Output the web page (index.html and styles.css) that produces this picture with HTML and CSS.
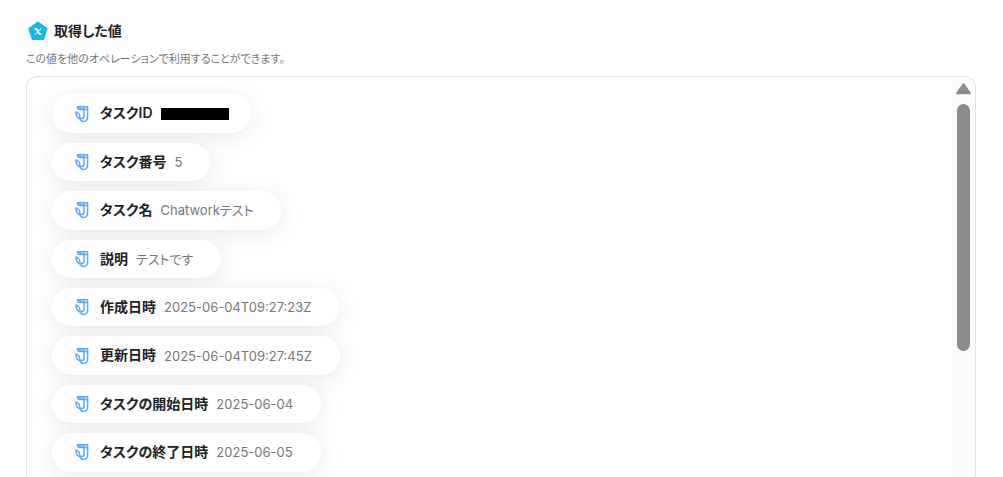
FILE: index.html
```
<!DOCTYPE html>
<html lang="ja">
	<head>
		<meta charset="utf-8">
		<title>取得した値</title>
		<link rel="stylesheet" href="styles.css">
	</head>
	<body>
		<svg class="defs" width="0" height="0" aria-hidden="true">
			<symbol id="task-icon" viewBox="0 0 16 18">
				<path d="M3.3 1.7H13.6V12C13.6 14.8 11.8 16.4 9.6 16.4C7.4 16.4 5.8 15 5.8 12.8"/>
				<path d="M3.3 1.7C3.5 3.6 4.5 4.6 6.4 4.6H10V11.2C10 12.9 9 13.6 7.4 13.6C3.8 13.6 1.9 11.6 1.9 7L4.8 8.8C5.6 9.4 5.8 10.4 5.8 12.8"/>
				<path d="M3.3 1.7L10 4.6V1.7M10 4.6H13.6"/>
			</symbol>
		</svg>
		<div class="page">
			<div class="heading">
				<svg class="heading-icon" viewBox="0 0 20 20" aria-hidden="true">
					<path class="badge" d="M10 1.5L18.6 7.8L15.3 18H4.7L1.4 7.8Z"/>
					<path class="mark" d="M6.6 7.9H8.1C9.8 7.9 10 13.1 11.8 13.1H13.3"/>
					<path class="mark mark-thin" d="M13.4 7.7C11 7.7 9.2 13.3 6.6 13.3"/>
				</svg>
				<h1 class="heading-title">取得した値</h1>
			</div>
			<p class="description">この値を他のオペレーションで利用することができます。</p>
			<div class="panel">
				<ul class="list">
					<li class="pill"><svg class="pill-icon"><use href="#task-icon"/></svg><span class="name">タスクID</span><span class="hidden-value"></span></li>
					<li class="pill"><svg class="pill-icon"><use href="#task-icon"/></svg><span class="name">タスク番号</span><span class="value">5</span></li>
					<li class="pill"><svg class="pill-icon"><use href="#task-icon"/></svg><span class="name">タスク名</span><span class="value">Chatworkテスト</span></li>
					<li class="pill"><svg class="pill-icon"><use href="#task-icon"/></svg><span class="name">説明</span><span class="value">テストです</span></li>
					<li class="pill"><svg class="pill-icon"><use href="#task-icon"/></svg><span class="name">作成日時</span><span class="value">2025-06-04T09:27:23Z</span></li>
					<li class="pill"><svg class="pill-icon"><use href="#task-icon"/></svg><span class="name">更新日時</span><span class="value">2025-06-04T09:27:45Z</span></li>
					<li class="pill"><svg class="pill-icon"><use href="#task-icon"/></svg><span class="name">タスクの開始日時</span><span class="value">2025-06-04</span></li>
					<li class="pill"><svg class="pill-icon"><use href="#task-icon"/></svg><span class="name">タスクの終了日時</span><span class="value">2025-06-05</span></li>
				</ul>
				<div class="scrollbar">
					<svg class="scroll-up" viewBox="0 0 16 12" aria-hidden="true"><path d="M8 2L14 10.5H2Z"/></svg>
					<div class="scroll-thumb"></div>
				</div>
			</div>
		</div>
	</body>
</html>
```
FILE: styles.css
```
*
{
	box-sizing: border-box;
}
body
{
	margin: 0;
	background-color: white;
	color: #222;
	font-family: Inter, "Noto Sans CJK JP", sans-serif;
	font-feature-settings: "palt";
	font-size: 14px;
	line-height: 1.6;
}
.defs
{
	position: absolute;
}
.page
{
	display: flex;
	flex-flow: column;
	height: 100vh;
	padding: 20px 27px 0 26px;
	overflow: hidden;
}
.heading
{
	display: flex;
	align-items: center;
	gap: 6px;
	padding-left: 2px;
}
.heading-icon
{
	width: 20px;
	height: 22px;
}
.badge
{
	fill: #12b9e9;
	stroke: #12b9e9;
	stroke-width: 2;
	stroke-linejoin: round;
}
.mark
{
	fill: none;
	stroke: white;
	stroke-width: 2;
}
.mark-thin
{
	stroke-width: 1;
}
.heading-title
{
	margin: 0;
	font-size: 14px;
	font-weight: 600;
}
.description
{
	margin: 7px 0;
	color: #777;
	font-size: 11px;
	line-height: 20px;
}
.panel
{
	display: flex;
	flex: 1;
	min-height: 0;
	overflow: hidden;
	border: 1px solid #e2e2e2;
	border-bottom: none;
	border-radius: 12px 12px 0 0;
}
.list
{
	display: flex;
	flex: 1;
	flex-flow: column;
	align-items: flex-start;
	gap: 10px;
	margin: 0;
	padding: 17px 25px;
	list-style: none;
}
.pill
{
	display: flex;
	align-items: center;
	gap: 8px;
	padding: 8px 22px;
	border-radius: 20px;
	background-color: white;
	box-shadow: 0 4px 24px rgba(0, 0, 0, 0.09);
}
.pill-icon
{
	width: 16px;
	height: 18px;
	margin-right: 2px;
	fill: none;
	stroke: #55aefb;
	stroke-width: 1.5;
	stroke-linejoin: round;
}
.name
{
	font-weight: 600;
}
.value
{
	padding-right: 6px;
	color: #777;
	font-size: 13px;
	line-height: 20px;
}
.hidden-value
{
	width: 68px;
	height: 12px;
	background-color: black;
}
.scrollbar
{
	display: flex;
	flex-flow: column;
	align-items: center;
	gap: 8px;
	width: 23px;
	padding-top: 4px;
	background-color: #fcfcfc;
}
.scroll-up
{
	width: 17px;
	height: 15px;
	fill: #8b8b8b;
	stroke: #8b8b8b;
	stroke-width: 2;
	stroke-linejoin: round;
}
.scroll-thumb
{
	width: 13px;
	height: 247px;
	border-radius: 7px;
	background-color: #8b8b8b;
}
```
